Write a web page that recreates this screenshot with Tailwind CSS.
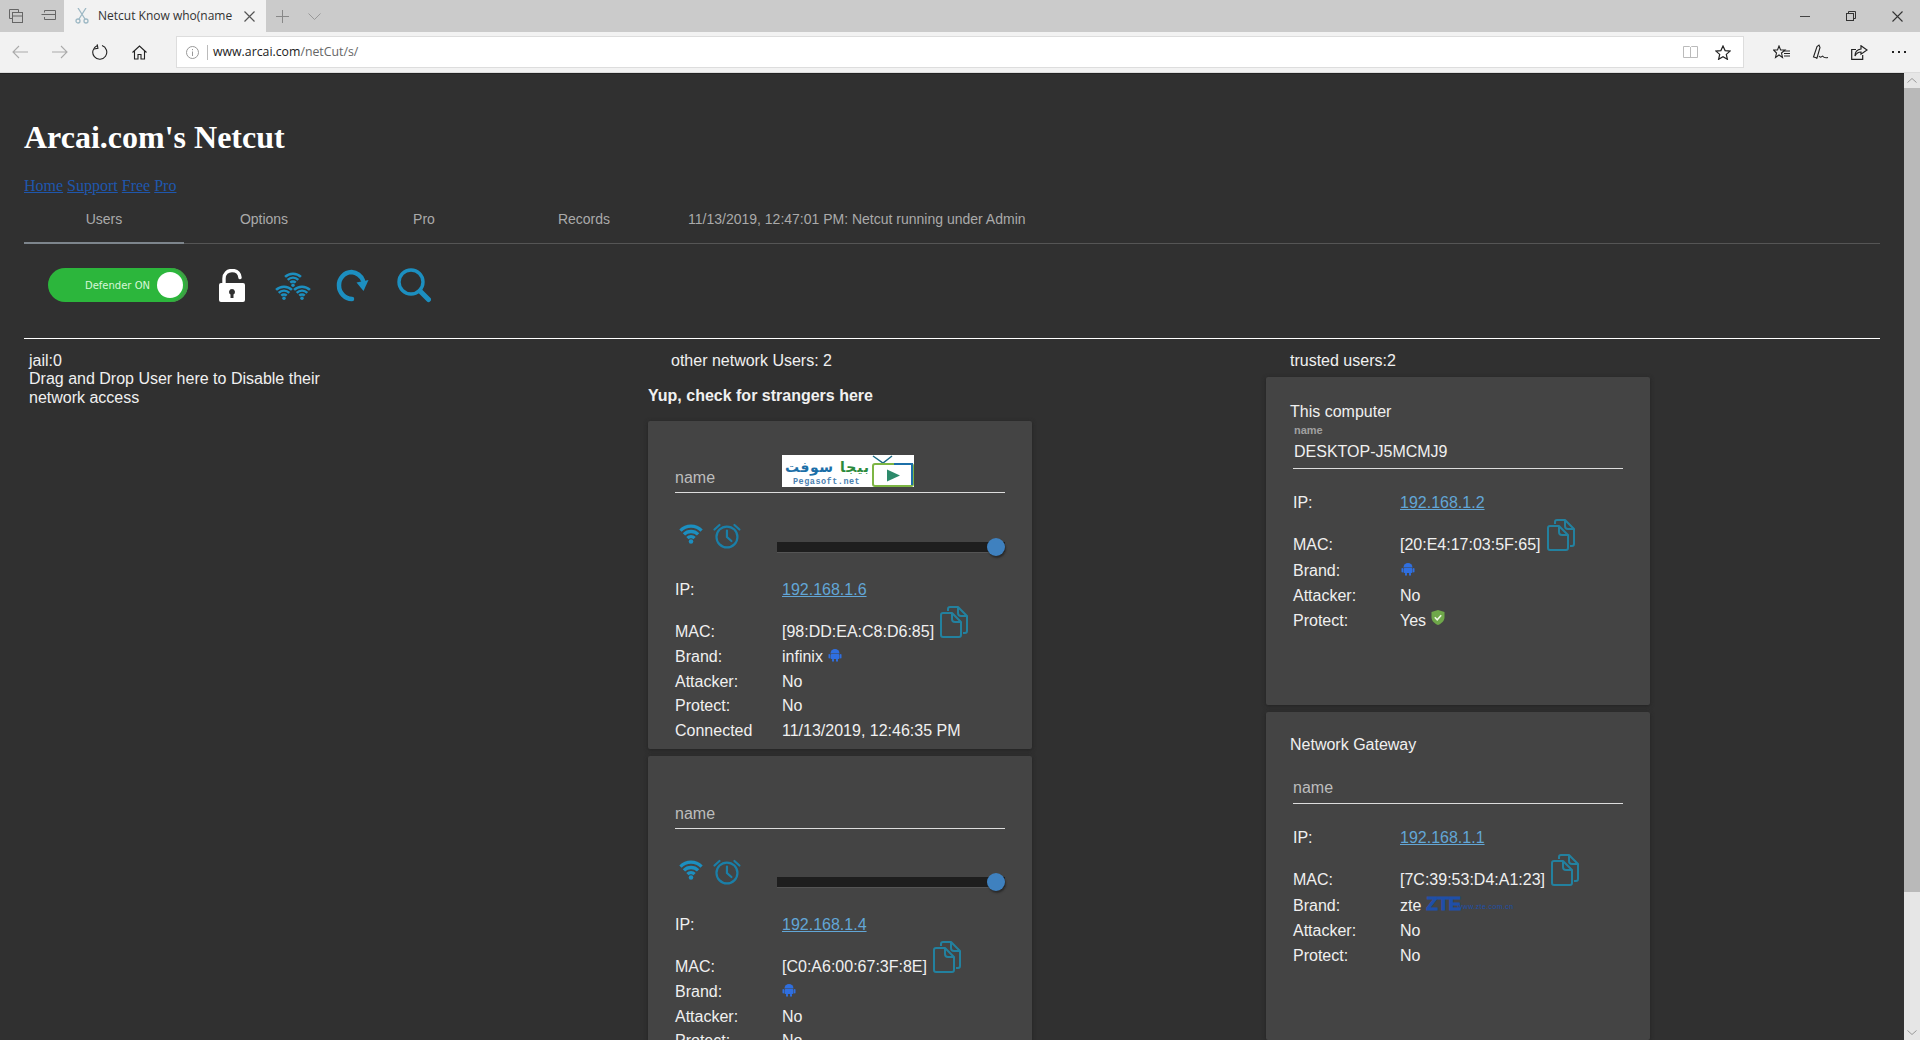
<!DOCTYPE html>
<html lang="en">
<head>
<meta charset="utf-8">
<title>Netcut Know who(name</title>
<script src="https://cdn.jsdelivr.net/npm/@tailwindcss/browser@4"></script>
</head>
<body class="w-[1920px] h-[1040px] overflow-hidden bg-[#303030] font-['Liberation_Sans',Arial,sans-serif] text-[16px] text-[#f0f0f0]">
<svg class="hidden" width="0" height="0">
  <defs>
    <symbol id="copy" viewBox="0 0 28 32"><g fill="none" stroke="currentColor" stroke-width="2" stroke-linejoin="round"><path d="M8 5V3q0-2 2-2h8l9 9v15q0 2-2 2h-2"/><path d="M18 1v6q0 3 3 3h6"/><path d="M1 9q0-2 2-2h9l9 9v13q0 2-2 2H3q-2 0-2-2z"/><path d="M12 7v6q0 3 3 3h6"/></g></symbol>
    <symbol id="droid" viewBox="0 0 14 14"><g fill="#2f6fe0"><path d="M2.500 5.500a4.500 4.500 0 0 1 9 0z"/><rect x="2.500" y="6" width="9" height="5" rx="1"/><rect x="0.500" y="6" width="1.600" height="4.500" rx=".8"/><rect x="11.900" y="6" width="1.600" height="4.500" rx=".8"/><rect x="4" y="10.500" width="2" height="3.200" rx="1"/><rect x="8" y="10.500" width="2" height="3.200" rx="1"/></g></symbol>
    <symbol id="fan" viewBox="0 0 16 14"><g fill="none" stroke="#1c8fc0" stroke-width="2.300"><path d="M.6 4.600A10.500 10.500 0 0 1 15.400 4.600"/><path d="M3.050 7.300A7 7 0 0 1 12.950 7.300"/><path d="M5.500 9.900A3.500 3.500 0 0 1 10.500 9.900"/></g><circle cx="8" cy="12.300" r="1.600" fill="#1c8fc0"/></symbol>
    <symbol id="alarm" viewBox="0 0 28 26"><g fill="none" stroke="#1a7fa8" stroke-width="2.200" stroke-linecap="round"><circle cx="14" cy="14" r="10.500"/><path d="M14 7.500V14l4.500 4"/><path d="M1.500 6.500 6.500 2"/><path d="M26.500 6.500 21.500 2"/></g></symbol>
  </defs>
</svg>

<!-- tab strip -->
<div class="flex h-[32px] items-center bg-[#cbcbcb] text-[#444]">
  <div class="flex w-[64px] h-full items-center pl-[9px] gap-[18px] text-[#666]">
    <svg width="14" height="14" viewBox="0 0 14 14" fill="none" stroke="currentColor"><path d="M.5.5h9v3M.5.5v9h3"/><rect x="3.500" y="3.500" width="10" height="10"/><path d="M3.500 7h10"/></svg>
    <svg width="15" height="12" viewBox="0 0 15 12" fill="none" stroke="currentColor"><path d="M3.500 2.500V.5h11v9h-11V7"/><path d="M.5 4.500h6M3.500 4.500h11"/></svg>
  </div>
  <div class="flex w-[202px] h-full items-center bg-[#f2f2f2] pl-[11px]">
    <svg width="14" height="16" viewBox="0 0 14 16" fill="none" stroke="#9db8c4" stroke-width="1.300"><path d="M3 0l7 11M11 0 4 11"/><circle cx="3" cy="13" r="2"/><circle cx="11" cy="13" r="2"/></svg>
    <span class="ml-[9px] w-[135px] overflow-hidden whitespace-nowrap font-['Open_Sans',sans-serif] text-[12px] text-[#333]">Netcut Know who(name</span>
    <svg class="ml-[11px]" width="11" height="11" viewBox="0 0 11 11" stroke="#555" stroke-width="1.200"><path d="M.5.500l10 10M10.500.500l-10 10"/></svg>
  </div>
  <svg class="ml-[10px]" width="13" height="13" viewBox="0 0 13 13" stroke="#888"><path d="M6.500 0v13M0 6.500h13"/></svg>
  <svg class="ml-[19px]" width="13" height="7" viewBox="0 0 13 7" fill="none" stroke="#999"><path d="M.5.500l6 6 6-6"/></svg>
  <div class="ml-auto flex items-center h-full">
    <svg class="mr-[36px]" width="10" height="1" viewBox="0 0 10 1"><path d="M0 .5h10" stroke="#444"/></svg>
    <svg class="mr-[36px]" width="10" height="10" viewBox="0 0 10 10" fill="none" stroke="#333"><rect x=".5" y="2.500" width="7" height="7"/><path d="M2.500 2.500v-2h7v7h-2"/></svg>
    <svg class="mr-[17px]" width="11" height="11" viewBox="0 0 11 11" stroke="#333" stroke-width="1.100"><path d="M.5.500l10 10M10.500.500l-10 10"/></svg>
  </div>
</div>

<!-- address row -->
<div class="flex h-[40px] items-center bg-[#f2f2f2] text-[#222]">
  <div class="flex w-[176px] items-center pl-[12px]">
    <svg width="16" height="14" viewBox="0 0 16 14" fill="none" stroke="#aaa" stroke-width="1.100"><path d="M16 7H1M7 1 1 7l6 6"/></svg>
    <svg class="ml-[24px]" width="16" height="14" viewBox="0 0 16 14" fill="none" stroke="#aaa" stroke-width="1.100"><path d="M0 7h15M9 1l6 6-6 6"/></svg>
    <svg class="ml-[24px]" width="16" height="16" viewBox="0 0 16 16" fill="none" stroke="#222" stroke-width="1.100"><path d="M10 1.600A7 7 0 1 1 5 1.800"/><path d="M5.500.5v4h-4" transform="rotate(-10 5 2)"/></svg>
    <svg class="ml-[24px]" width="15" height="15" viewBox="0 0 15 15" fill="none" stroke="#222" stroke-width="1.100"><path d="M.5 7.500l7-6.500 7 6.500M2.500 6v8h3.500V9.500h3V14h3.500V6"/></svg>
  </div>
  <div class="flex h-[32px] w-[1568px] items-center border border-[#ddd] bg-white">
    <svg class="ml-[9px]" width="13" height="13" viewBox="0 0 13 13" fill="none" stroke="#999"><circle cx="6.500" cy="6.500" r="6"/><path d="M6.500 5.500V10M6.500 3v1.200"/></svg>
    <div class="ml-[8px] h-[15px] w-px bg-[#bbb]"></div>
    <span class="ml-[5px] font-['Open_Sans',sans-serif] text-[12.3px] text-[#222]">www.arcai.com<span class="text-[#666]">/netCut/s/</span></span>
    <svg class="ml-auto" width="15" height="14" viewBox="0 0 15 14" fill="none" stroke="#bbb"><path d="M7.500 2v11M.5 1.500h6l1 1 1-1h6v11h-14z"/></svg>
    <svg class="ml-[17px] mr-[12px]" width="16" height="15" viewBox="0 0 16 15" fill="none" stroke="#222" stroke-width="1.200"><path d="M8 1l2.100 4.600 5 .5-3.800 3.300 1.100 4.900L8 11.800l-4.400 2.500 1.100-4.900L.9 6.100l5-.5z"/></svg>
  </div>
  <div class="flex flex-1 items-center pl-[29px]">
    <svg width="17" height="15" viewBox="0 0 17 15" fill="none" stroke="#222" stroke-width="1.100"><path d="M6 1 7.600 5H12L8.500 8l1 4.500L6 10l-3.500 2.500 1-4.500L.5 5h4z"/><path d="M11 6h6M11 8.500h6M11 11h6"/></svg>
    <svg class="ml-[22px]" width="17" height="17" viewBox="0 0 17 17" fill="none" stroke="#222" stroke-width="1.100"><path d="M1.500 13 5 2.500 7 1l1 2.500L5 14zM5 14l-1 .5M7 12c2 3 3-1 4 .5s2 1.500 5 1"/></svg>
    <svg class="ml-[22px]" width="17" height="15" viewBox="0 0 17 15" fill="none" stroke="#222" stroke-width="1.200"><path d="M5 4.500H.7v9.800h11V10"/><path d="M10 .8l6 4.200-6 4.200V7C7 7 5.500 8 4 11c0-4 2-6.500 6-7z"/></svg>
    <div class="ml-[24px] flex gap-[4px]"><i class="size-[2px] bg-[#222]"></i><i class="size-[2px] bg-[#222]"></i><i class="size-[2px] bg-[#222]"></i></div>
  </div>
</div>
<div class="h-px bg-[#dcdcdc]"></div>

<div class="flex h-[967px]">
  <!-- page -->
  <main class="w-[1904px] overflow-hidden border-t border-[#232323] pl-[24px] pr-[24px]">
    <h1 class="pt-[45px] font-['Liberation_Serif',serif] text-[32px] font-bold leading-[37px] text-white">Arcai.com's Netcut</h1>
    <div class="mt-[21px] h-[18px] font-['Liberation_Serif',serif] text-[16px] leading-[18px] text-[#1f57ad]"><a class="underline">Home</a> <a class="underline">Support</a> <a class="underline">Free</a> <a class="underline">Pro</a></div>

    <nav class="flex h-[49px] items-stretch border-b border-[#555] text-[14px] text-[#aaa]">
      <div class="-mb-px flex w-[160px] items-center justify-center border-b-2 border-[#7d858c] pt-px">Users</div>
      <div class="flex w-[160px] items-center justify-center">Options</div>
      <div class="flex w-[160px] items-center justify-center">Pro</div>
      <div class="flex w-[160px] items-center justify-center">Records</div>
      <div class="flex items-center pl-[24px]">11/13/2019, 12:47:01 PM: Netcut running under Admin</div>
    </nav>

    <div class="flex h-[94px] items-center pb-[12px] pl-[24px]">
      <div class="relative flex h-[34px] w-[140px] items-center rounded-full bg-[#2cb63c] pl-[37px] font-['DejaVu_Sans',sans-serif] text-[10px] text-[#d8f7d8] shadow-[inset_-3px_0_0_#3f9e45]">
        Defender ON
        <span class="absolute right-[5px] top-[4px] size-[26px] rounded-full bg-white"></span>
      </div>
      <svg class="ml-[31px]" width="26" height="33" viewBox="0 0 26 33"><path d="M5 15V9.500C5 4.500 8.500 1.500 13 1.500s7.500 2.500 8 7" fill="none" stroke="#fff" stroke-width="3.400" stroke-linecap="round"/><path fill="#fff" fill-rule="evenodd" d="M2 14h22q2 0 2 2v15q0 2-2 2H2q-2 0-2-2V16q0-2 2-2zm11 6a3 3 0 0 0-1.500 5.600V29h3v-3.400A3 3 0 0 0 13 20z"/></svg>
      <svg class="ml-[30px] mt-[2px]" width="36" height="28" viewBox="0 0 36 28"><use href="#fan" x="9" y="0" width="18" height="15"/><use href="#fan" x="0" y="13" width="18" height="15"/><use href="#fan" x="18" y="13" width="18" height="15"/></svg>
      <svg class="ml-[25px]" width="33" height="33" viewBox="0 0 33 33"><path d="M27 11.500A14 14 0 0 0 15.500 3 13 13 0 0 0 3 16.500 13.500 13.500 0 0 0 16 30" fill="none" stroke="#1c8fc0" stroke-width="4.500" stroke-linecap="round"/><path d="M20.500 13.500 32.500 11l-5 11z" fill="#1c8fc0"/></svg>
      <svg class="ml-[28px]" width="34" height="35" viewBox="0 0 34 35"><circle cx="14" cy="14" r="12" fill="none" stroke="#1c8fc0" stroke-width="3.400"/><path d="M23 23l8.500 8.500" stroke="#1c8fc0" stroke-width="5" stroke-linecap="round"/></svg>
    </div>

    <div class="h-px bg-white"></div>

    <div class="flex pt-[13px] leading-[18.4px]">
      <!-- jail -->
      <section class="w-[624px] pl-[5px]">
        <div class="w-[310px]">jail:0<br>Drag and Drop User here to Disable their network access</div>
      </section>

      <!-- other users -->
      <section class="w-[618px]">
        <div class="h-[18px] pl-[23px] leading-[18px]">other network Users: 2</div>
        <div class="mt-[17px] h-[18px] font-bold leading-[18px]">Yup, check for strangers here</div>

        <article class="mt-[16px] h-[328px] w-[384px] rounded-[2px] bg-[#444444] px-[27px] pt-[34px] shadow-[0_1px_4px_#222]">
          <div class="flex h-[38px] border-b border-[#ddd]">
            <span class="w-[107px] self-end pb-[5px] text-[#bdbdbd]">name</span>
            <div class="relative h-[32px] w-[132px] overflow-hidden bg-white">
              <svg width="132" height="32" viewBox="0 0 132 32">
                <text x="3" y="17" font-family="DejaVu Sans" font-size="14" font-weight="700" fill="#1c6fa8" textLength="48">سوفت</text>
                <text x="58" y="17" font-family="DejaVu Sans" font-size="14" font-weight="700" fill="#2c8a3c" textLength="29">بيجا</text>
                <text x="11" y="29" font-family="Liberation Mono" font-size="8.500" font-weight="700" letter-spacing=".5" fill="#4b7fb0">Pegasoft.net</text>
                <path d="M91 1l10 7 9-7" fill="none" stroke="#1d6b85" stroke-width="1.500"/>
                <rect x="91" y="9" width="40" height="22" rx="2" fill="#fff" stroke="#7db544" stroke-width="2"/>
                <path d="M105 14.500l13 6-13 6z" fill="#2d8a6b"/>
                <path d="M112 9h18v21" fill="none" stroke="#1c6fa8" stroke-width="2"/>
              </svg>
            </div>
          </div>
          <div class="mt-[32px] flex h-[30px] items-start">
            <svg class="-mt-px ml-[4px]" width="24" height="20"><use href="#fan" width="24" height="20"/></svg>
            <svg class="-mt-[2px] ml-[10px]" width="28" height="26"><use href="#alarm"/></svg>
            <div class="relative ml-[36px] mt-[17px] h-[10px] w-[229px] bg-[#1e1e1e] shadow-[0_1px_0_#555]">
              <span class="absolute -top-[4px] right-0 size-[18px] rounded-full bg-[#3f81bf] shadow-[1px_2px_2px_#2a2a2a]"></span>
            </div>
          </div>
          <div class="mt-[26px] flex h-[18px] leading-[18px]"><span class="w-[107px]">IP:</span><a class="text-[#62a6d6] underline">192.168.1.6</a></div>
          <div class="mt-[24px] flex h-[18px] items-end leading-[18px]"><span class="w-[107px]">MAC:</span><span>[98:DD:EA:C8:D6:85]</span><svg class="mb-[3px] ml-[6px] text-[#23819f]" width="28" height="32"><use href="#copy"/></svg></div>
          <div class="mt-[4px] leading-[24.6px]">
            <div class="flex"><span class="w-[107px]">Brand:</span><span>infinix</span><svg class="ml-[5px] mt-[3px]" width="14" height="14"><use href="#droid"/></svg></div>
            <div class="flex"><span class="w-[107px]">Attacker:</span><span>No</span></div>
            <div class="flex"><span class="w-[107px]">Protect:</span><span>No</span></div>
            <div class="flex"><span class="w-[107px]">Connected</span><span>11/13/2019, 12:46:35 PM</span></div>
          </div>
        </article>

        <article class="mt-[7px] h-[327px] w-[384px] rounded-[2px] bg-[#444444] px-[27px] pt-[35px] shadow-[0_1px_4px_#222]">
          <div class="flex h-[38px] border-b border-[#ddd]">
            <span class="w-[107px] self-end pb-[5px] text-[#bdbdbd]">name</span>
          </div>
          <div class="mt-[31px] flex h-[30px] items-start">
            <svg class="ml-[4px]" width="24" height="20"><use href="#fan" width="24" height="20"/></svg>
            <svg class="-mt-px ml-[10px]" width="28" height="26"><use href="#alarm"/></svg>
            <div class="relative ml-[36px] mt-[17px] h-[10px] w-[229px] bg-[#1e1e1e] shadow-[0_1px_0_#555]">
              <span class="absolute -top-[4px] right-0 size-[18px] rounded-full bg-[#3f81bf] shadow-[1px_2px_2px_#2a2a2a]"></span>
            </div>
          </div>
          <div class="mt-[26px] flex h-[18px] leading-[18px]"><span class="w-[107px]">IP:</span><a class="text-[#62a6d6] underline">192.168.1.4</a></div>
          <div class="mt-[24px] flex h-[18px] items-end leading-[18px]"><span class="w-[107px]">MAC:</span><span>[C0:A6:00:67:3F:8E]</span><svg class="mb-[3px] ml-[6px] text-[#23819f]" width="28" height="32"><use href="#copy"/></svg></div>
          <div class="mt-[4px] leading-[24.6px]">
            <div class="flex"><span class="w-[107px]">Brand:</span><svg class="mt-[3px]" width="14" height="14"><use href="#droid"/></svg></div>
            <div class="flex"><span class="w-[107px]">Attacker:</span><span>No</span></div>
            <div class="flex"><span class="w-[107px]">Protect:</span><span>No</span></div>
          </div>
        </article>
      </section>

      <!-- trusted -->
      <section class="w-[384px]">
        <div class="h-[18px] pl-[24px] leading-[18px]">trusted users:2</div>

        <article class="mt-[7px] h-[328px] rounded-[2px] bg-[#444444] pl-[24px] pt-[26px] shadow-[0_1px_4px_#222]">
          <div class="h-[18px] leading-[18px]">This computer</div>
          <div class="ml-[3px] w-[330px]">
            <div class="mt-[3px] h-[12px] pl-[1px] text-[11px] font-bold leading-[12px] text-[#a0a0a0]">name</div>
            <div class="border-b border-[#ddd] pb-[7px] pl-[1px] pt-[7px] leading-[18px]">DESKTOP-J5MCMJ9</div>
            <div class="mt-[25px] flex h-[18px] leading-[18px]"><span class="w-[107px]">IP:</span><a class="text-[#62a6d6] underline">192.168.1.2</a></div>
            <div class="mt-[24px] flex h-[18px] items-end leading-[18px]"><span class="w-[107px]">MAC:</span><span>[20:E4:17:03:5F:65]</span><svg class="mb-[3px] ml-[6px] text-[#23819f]" width="28" height="32"><use href="#copy"/></svg></div>
            <div class="mt-[4px] leading-[25px]">
              <div class="flex"><span class="w-[107px]">Brand:</span><svg class="ml-[1px] mt-[4px]" width="14" height="14"><use href="#droid"/></svg></div>
              <div class="flex"><span class="w-[107px]">Attacker:</span><span>No</span></div>
              <div class="flex"><span class="w-[107px]">Protect:</span><span>Yes</span>
                <svg class="ml-[5px] mt-[2px]" width="14" height="15" viewBox="0 0 14 15"><path d="M7 0l6.500 2v5c0 4-3 6.500-6.500 8C3.500 13.500.5 11 .5 7V2z" fill="#6fa84a"/><path d="M3.800 7.200l2.400 2.500 4-4.500" fill="none" stroke="#eef7e4" stroke-width="1.600"/></svg>
              </div>
            </div>
          </div>
        </article>

        <article class="mt-[7px] h-[328px] rounded-[2px] bg-[#444444] pl-[24px] pt-[24px] shadow-[0_1px_4px_#222]">
          <div class="h-[18px] leading-[18px]">Network Gateway</div>
          <div class="ml-[3px] w-[330px]">
            <div class="mt-[25px] border-b border-[#ddd] pb-[6px] leading-[18px] text-[#bdbdbd]">name</div>
            <div class="mt-[25px] flex h-[18px] leading-[18px]"><span class="w-[107px]">IP:</span><a class="text-[#62a6d6] underline">192.168.1.1</a></div>
            <div class="mt-[24px] flex h-[18px] items-end leading-[18px]"><span class="w-[107px]">MAC:</span><span>[7C:39:53:D4:A1:23]</span><svg class="mb-[3px] ml-[6px] text-[#23819f]" width="28" height="32"><use href="#copy"/></svg></div>
            <div class="mt-[4px] leading-[25px]">
              <div class="flex"><span class="w-[107px]">Brand:</span><span>zte</span><span class="ml-[5px] mt-[-1px] w-[28px] text-[19px] font-bold leading-[24px] tracking-[-0.5px] text-[#1f4fa8] [-webkit-text-stroke:1px_#1f4fa8]">ZTE</span><span class="ml-[3px] mt-[5px] whitespace-nowrap text-[7px] leading-[18px] tracking-[.4px] text-[#1f4fa8]">www.zte.com.cn</span></div>
              <div class="flex"><span class="w-[107px]">Attacker:</span><span>No</span></div>
              <div class="flex"><span class="w-[107px]">Protect:</span><span>No</span></div>
            </div>
          </div>
        </article>
      </section>
    </div>
  </main>

  <!-- scrollbar -->
  <aside class="flex w-[16px] flex-col bg-[#e6e6e6]">
    <div class="flex h-[15px] items-center justify-center"><svg width="10" height="5" viewBox="0 0 10 5" fill="none" stroke="#999"><path d="M.5 4.500 5 .5l4.500 4"/></svg></div>
    <div class="h-[804px] bg-[#b9b9b9]"></div>
    <div class="flex-1"></div>
    <div class="flex h-[15px] items-center justify-center"><svg width="10" height="5" viewBox="0 0 10 5" fill="none" stroke="#999"><path d="M.5.5 5 4.500l4.500-4"/></svg></div>
  </aside>
</div>
</body>
</html>
